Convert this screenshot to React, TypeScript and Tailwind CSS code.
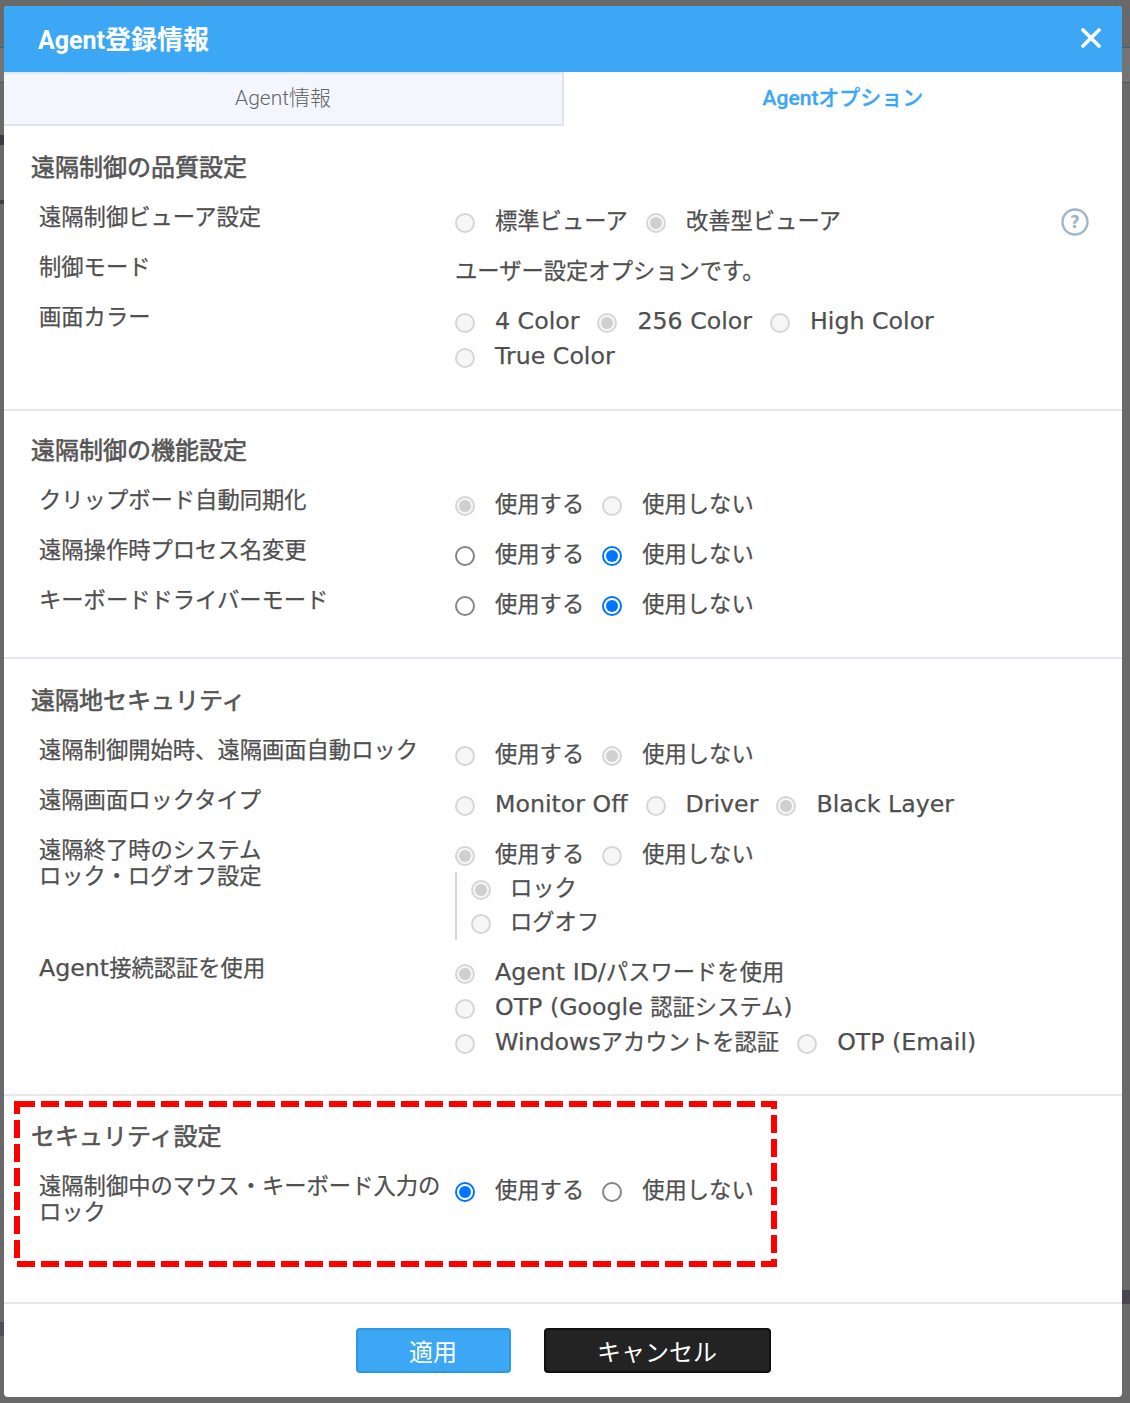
const font = "[font-family:'DejaVu_Sans','Noto_Sans_CJK_JP',sans-serif]";

type Kind = 'off' | 'on' | 'disabled' | 'disabledOn';

function Mixed({ text }: { text: string }) {
  const parts = text.split(/([\x20-\x7E]+)/);
  return (
    <>
      {parts.map((p, i) =>
        i % 2 === 1 ? (
          <span key={i} className="text-[23.7px]">
            {p}
          </span>
        ) : (
          p
        ),
      )}
    </>
  );
}

function Radio({ kind }: { kind: Kind }) {
  const border =
    kind === 'off'
      ? 'border-[#858585] bg-white'
      : kind === 'on'
        ? 'border-[#0075ff] bg-white'
        : 'border-[#d6d6d6] bg-[#f6f6f6]';
  return (
    <span className={`w-5 h-5 mt-[2px] rounded-full border-2 shrink-0 flex items-center justify-center ${border}`}>
      {kind === 'on' && <span className="w-3 h-3 rounded-full bg-[#0075ff]" />}
      {kind === 'disabledOn' && <span className="w-3 h-3 rounded-full bg-[#cfcfcf]" />}
    </span>
  );
}

function Opt({ kind, label, gap = 'gap-5' }: { kind: Kind; label: string; gap?: string }) {
  return (
    <span className={`flex items-center ${gap}`}>
      <Radio kind={kind} />
      <span className="whitespace-nowrap">
        <Mixed text={label} />
      </span>
    </span>
  );
}

function Line({ children }: { children: React.ReactNode }) {
  return <div className="flex items-center gap-[18px] h-[35px]">{children}</div>;
}

function Row({ label, children, h = 'h-[50px]' }: { label: React.ReactNode; children: React.ReactNode; h?: string }) {
  return (
    <div className={`flex pl-[35px] ${h}`}>
      <div className="w-[416px] shrink-0 leading-[26px]">{label}</div>
      <div className="flex-1">{children}</div>
    </div>
  );
}

function Section({ title, children, cls }: { title: string; children: React.ReactNode; cls: string }) {
  return (
    <section className={`relative border-b-2 border-[#e4e7ec] ${cls}`}>
      <h3 className="pl-[27px] text-[24px] leading-[30px] font-normal [-webkit-text-stroke:0.6px_#555] text-[#555] mb-[21px]">{title}</h3>
      {children}
    </section>
  );
}

export default function App() {
  return (
    <div className={`relative w-[1130px] h-[1403px] bg-[#696969] pt-[6px] pl-[4px] pr-[8px] pb-[6px] text-[22.3px] text-[#4f4f4f] [-webkit-text-stroke:0.25px_#4f4f4f] ${font}`}>
      {/* page behind the modal, showing at its edges */}
      <div className="absolute left-0 right-0 top-[47px] h-[36px] bg-[#747474] border-t border-b border-t-[#2f6482] border-b-[#555]" />
      <div className="absolute left-0 w-[4px] top-[135px] h-[10px] bg-[#3a3d44]" />
      <div className="absolute left-0 w-[4px] top-[200px] h-[4px] bg-[#3a3d44]" />
      <div className="absolute right-0 w-[8px] top-[1290px] h-[14px] bg-[#4a4650]" />
      <div className="absolute left-0 w-[4px] top-[1322px] h-[14px] bg-[#4a4f58]" />

      <div className="relative h-full bg-white rounded-[4px] overflow-hidden flex flex-col">
        <header className="h-[66px] shrink-0 bg-[#3ca7f5] flex items-center justify-between pl-[34px] pr-[21px]">
          <h2 className="text-[26px] mt-[2px] font-bold text-white [-webkit-text-stroke:0px] [font-family:'Roboto','Noto_Sans_CJK_JP',sans-serif]">
            <span className="text-[25px]">Agent</span>登録情報
          </h2>
          <svg width="20" height="20" viewBox="0 0 20 20" className="-mt-[2px]">
            <path d="M2 2 L18 18 M18 2 L2 18" stroke="#fff" strokeWidth="3.6" strokeLinecap="round" />
          </svg>
        </header>

        <nav className="flex h-[54px] shrink-0 [font-family:'Roboto','Noto_Sans_CJK_JP',sans-serif] text-[21px] [-webkit-text-stroke:0px]">
          <div className="w-[560px] bg-[#f3f6fc] border-b-2 border-r-2 border-t-2 border-t-[#e3e8f0] border-[#dfe3ea] flex items-center justify-center text-[#666] font-light">
            Agent情報
          </div>
          <div className="flex-1 flex items-center justify-center text-[#3ca7f5] font-medium [-webkit-text-stroke:0.3px_#3ca7f5]">Agentオプション</div>
        </nav>

        <Section title="遠隔制御の品質設定" cls="h-[285px] pt-[27px]">
          <div className="relative">
            <Row label="遠隔制御ビューア設定">
              <Line>
                <Opt kind="disabled" label="標準ビューア" />
                <Opt kind="disabledOn" label="改善型ビューア" />
              </Line>
            </Row>
            <svg width="28" height="28" viewBox="0 0 28 28" className="absolute right-[33px] top-[4px]">
              <circle cx="14" cy="14" r="12.5" fill="none" stroke="#9db8cc" strokeWidth="2.4" />
              <text x="14" y="20" textAnchor="middle" fontSize="17" fontWeight="700" fill="#9db8cc" stroke="none">?</text>
            </svg>
          </div>
          <Row label="制御モード">
            <Line>ユーザー設定オプションです。</Line>
          </Row>
          <Row label="画面カラー">
            <Line>
              <Opt kind="disabled" label="4 Color" />
              <Opt kind="disabledOn" label="256 Color" />
              <Opt kind="disabled" label="High Color" />
            </Line>
            <Line>
              <Opt kind="disabled" label="True Color" />
            </Line>
          </Row>
        </Section>

        <Section title="遠隔制御の機能設定" cls="h-[248px] pt-[25px]">
          <Row label="クリップボード自動同期化">
            <Line>
              <Opt kind="disabledOn" label="使用する" />
              <Opt kind="disabled" label="使用しない" />
            </Line>
          </Row>
          <Row label="遠隔操作時プロセス名変更">
            <Line>
              <Opt kind="off" label="使用する" />
              <Opt kind="on" label="使用しない" />
            </Line>
          </Row>
          <Row label="キーボードドライバーモード">
            <Line>
              <Opt kind="off" label="使用する" />
              <Opt kind="on" label="使用しない" />
            </Line>
          </Row>
        </Section>

        <Section title="遠隔地セキュリティ" cls="h-[437px] pt-[27px]">
          <Row label="遠隔制御開始時、遠隔画面自動ロック">
            <Line>
              <Opt kind="disabled" label="使用する" />
              <Opt kind="disabledOn" label="使用しない" />
            </Line>
          </Row>
          <Row label="遠隔画面ロックタイプ">
            <Line>
              <Opt kind="disabled" label="Monitor Off" />
              <Opt kind="disabled" label="Driver" />
              <Opt kind="disabledOn" label="Black Layer" />
            </Line>
          </Row>
          <Row h="h-[118px]" label={<>遠隔終了時のシステム<br />ロック・ログオフ設定</>}>
            <Line>
              <Opt kind="disabledOn" label="使用する" />
              <Opt kind="disabled" label="使用しない" />
            </Line>
            <div className="border-l-2 border-[#d4d4d4] pl-[14px] h-[68px] flex flex-col">
              <Line>
                <Opt kind="disabledOn" label="ロック" gap="gap-[19px]" />
              </Line>
              <Line>
                <Opt kind="disabled" label="ログオフ" gap="gap-[19px]" />
              </Line>
            </div>
          </Row>
          <Row h="h-[110px]" label={<Mixed text="Agent接続認証を使用" />}>
            <Line>
              <Opt kind="disabledOn" label="Agent ID/パスワードを使用" />
            </Line>
            <Line>
              <Opt kind="disabled" label="OTP (Google 認証システム)" />
            </Line>
            <Line>
              <Opt kind="disabled" label="Windowsアカウントを認証" />
              <Opt kind="disabled" label="OTP (Email)" />
            </Line>
          </Row>
        </Section>

        <Section title="セキュリティ設定" cls="h-[208px] pt-[26px]">
          <Row h="h-[60px]" label={<>遠隔制御中のマウス・キーボード入力の<br />ロック</>}>
            <Line>
              <Opt kind="on" label="使用する" />
              <Opt kind="off" label="使用しない" />
            </Line>
          </Row>
          <svg width="763" height="166" className="absolute left-[10px] top-[5px]">
            <rect x="3" y="3" width="757" height="160" fill="none" stroke="#ff0000" strokeWidth="6" strokeDasharray="18 6" />
          </svg>
        </Section>

        <footer className="flex-1 flex items-start justify-center gap-[33px] pt-[24px] text-[24px] [-webkit-text-stroke:0px] [font-family:'Noto_Sans_CJK_JP',sans-serif]">
          <button className="w-[155px] h-[45px] rounded-[4px] bg-[#3ca7f5] border-2 border-[#2b9ae0] text-white">適用</button>
          <button className="w-[227px] h-[45px] rounded-[4px] bg-[#232323] border-2 border-[#111] text-white">キャンセル</button>
        </footer>
      </div>
    </div>
  );
}
